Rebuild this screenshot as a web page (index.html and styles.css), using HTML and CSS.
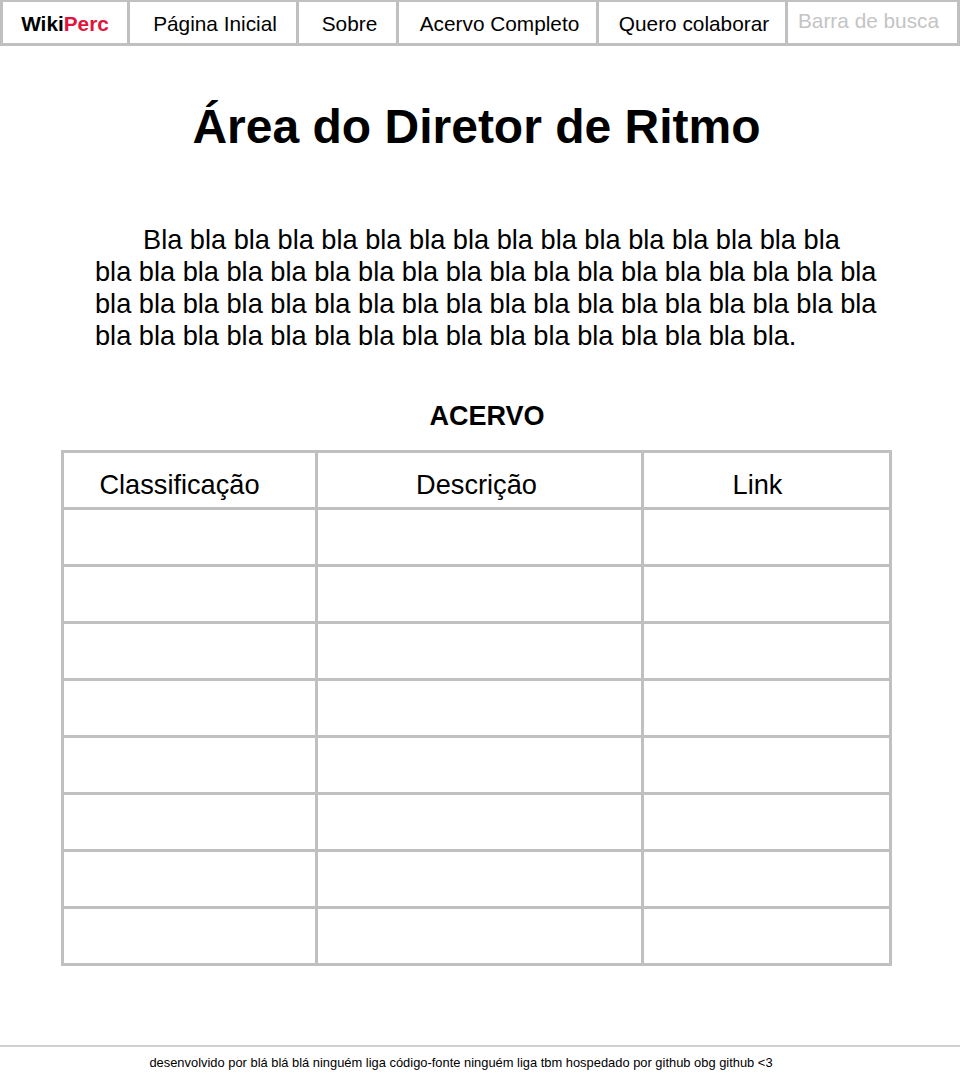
FILE: index.html
```html
<!DOCTYPE html>
<html lang="pt-BR">
<head>
<meta charset="utf-8">
<title>WikiPerc - Área do Diretor de Ritmo</title>
<link rel="stylesheet" href="styles.css">
</head>
<body>
<nav class="topnav">
  <a class="nav-item brand" href="#"><span class="brand-wiki">Wiki</span><span class="brand-perc">Perc</span></a>
  <a class="nav-item" href="#">Página Inicial</a>
  <a class="nav-item" href="#">Sobre</a>
  <a class="nav-item" href="#">Acervo Completo</a>
  <a class="nav-item" href="#">Quero colaborar</a>
  <div class="nav-item search"><input class="search-input" type="text" placeholder="Barra de busca"></div>
</nav>

<main class="content">
  <h1 class="title">Área do Diretor de Ritmo</h1>
  <p class="intro">Bla bla bla bla bla bla bla bla bla bla bla bla bla bla bla bla bla bla bla bla bla bla bla bla bla bla bla bla bla bla bla bla bla bla bla bla bla bla bla bla bla bla bla bla bla bla bla bla bla bla bla bla bla bla bla bla bla bla bla bla bla bla bla bla bla bla bla bla.</p>

  <h2 class="section-title">ACERVO</h2>
  <table class="acervo">
    <thead>
      <tr><th class="col-class">Classificação</th><th class="col-desc">Descrição</th><th class="col-link">Link</th></tr>
    </thead>
    <tbody>
      <tr><td></td><td></td><td></td></tr>
      <tr><td></td><td></td><td></td></tr>
      <tr><td></td><td></td><td></td></tr>
      <tr><td></td><td></td><td></td></tr>
      <tr><td></td><td></td><td></td></tr>
      <tr><td></td><td></td><td></td></tr>
      <tr><td></td><td></td><td></td></tr>
      <tr><td></td><td></td><td></td></tr>
    </tbody>
  </table>
</main>

<footer class="footer">
  <p class="footer-text">desenvolvido por blá blá blá ninguém liga código-fonte ninguém liga tbm hospedado por github obg github &lt;3</p>
</footer>
</body>
</html>
```

FILE: styles.css
```css
* { box-sizing: border-box; }

html, body {
  margin: 0;
  padding: 0;
  background: #ffffff;
  color: #000000;
  font-family: "Liberation Sans", Arial, sans-serif;
}

.topnav {
  display: grid;
  grid-template-columns: 124px 166px 97px 197px 186px 1fr;
  column-gap: 3px;
  padding: 2px 3px 3px 3px;
  background: #c0c0c0;
  height: 46px;
}

.nav-item {
  background: #ffffff;
  display: flex;
  align-items: center;
  justify-content: center;
  color: #000000;
  text-decoration: none;
  font-size: 20.8px;
  padding: 3px 0 0 4px;
}

.brand { font-weight: bold; padding-left: 0; }
.brand-perc { color: #e0143c; }

.search {
  padding: 0 0 4px 0;
}

.search-input {
  width: 100%;
  border: 0;
  outline: none;
  background: transparent;
  font-family: "Liberation Sans", Arial, sans-serif;
  font-size: 20.8px;
  padding: 0 10px;
  text-align: left;
}

.search-input::placeholder { color: #c4c4c4; }

.content {
  display: flex;
  flex-direction: column;
  align-items: flex-start;
}

.title {
  align-self: center;
  margin: 53px 0 0 -7px;
  font-size: 48px;
  line-height: 55px;
  font-weight: bold;
}

.intro {
  margin: 70px 0 0 95px;
  width: 786px;
  font-size: 27.2px;
  line-height: 32px;
  text-indent: 48px;
}

.section-title {
  align-self: center;
  margin: 49px 0 0 14px;
  font-size: 27px;
  line-height: 31px;
  font-weight: bold;
}

.acervo {
  margin: 18px 0 0 61px;
  width: 828px;
  border-collapse: collapse;
  table-layout: fixed;
  border: 3px solid #c0c0c0;
}

.acervo th,
.acervo td {
  border: 3px solid #c0c0c0;
  height: 57px;
  padding: 0;
  font-size: 27.2px;
  font-weight: normal;
  text-align: center;
}

.acervo th { padding-top: 10px; }

.acervo .col-class { width: 254px; padding-right: 20px; }
.acervo .col-desc { width: 326px; padding-right: 6px; }
.acervo .col-link { width: 248px; padding-right: 18px; }

.footer {
  margin-top: 79px;
  border-top: 2px solid #d0d0d0;
}

.footer-text {
  margin: 8px 0 0 0;
  padding-right: 38px;
  text-align: center;
  font-size: 12.9px;
  line-height: 16px;
}
```
